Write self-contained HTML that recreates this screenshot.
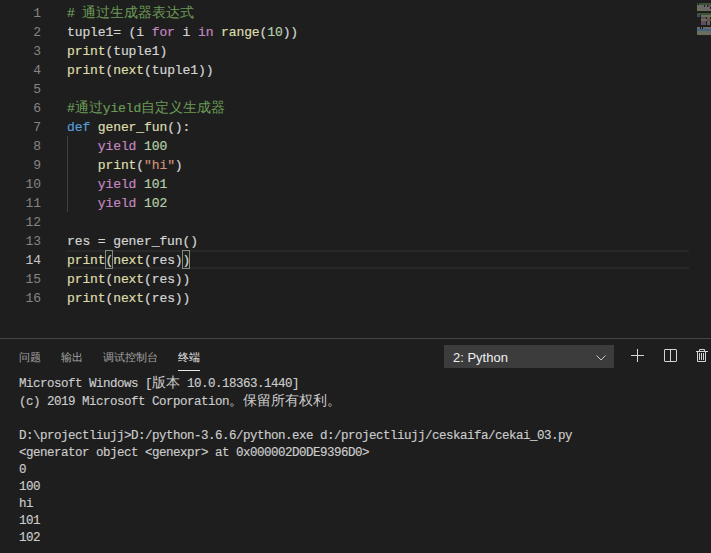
<!DOCTYPE html>
<html><head><meta charset="utf-8">
<style>
html,body{margin:0;padding:0;}
body{width:711px;height:553px;overflow:hidden;background:#1e1e1e;position:relative;font-family:"Liberation Mono",monospace;}
.ln{position:absolute;left:0;width:41px;text-align:right;font-size:13px;letter-spacing:-0.1px;line-height:19px;color:#858585;white-space:pre;}
.code{-webkit-text-stroke:0.2px currentColor;position:absolute;left:67px;font-size:13px;letter-spacing:-0.1px;line-height:19px;color:#d4d4d4;white-space:pre;}
.c{color:#6a9955}.k{color:#c586c0}.f{color:#dcdcaa}.n{color:#b5cea8}.s{color:#ce9178}.d{color:#569cd6}
.z{display:inline-block;width:14px;letter-spacing:0;text-align:center;-webkit-text-stroke:0;font-size:14px;line-height:17px;font-weight:300;}
.term{-webkit-text-stroke:0.15px currentColor;position:absolute;left:19px;font-size:12.5px;letter-spacing:-0.5px;line-height:17px;color:#cccccc;white-space:pre;}
.tab{position:absolute;top:348px;font-family:"Liberation Sans",sans-serif;font-size:11px;line-height:18px;color:#a4a4a4;white-space:pre;}
.z11{display:inline-block;width:11px;text-align:center;}
</style></head><body>
<!-- current line highlight -->
<div style="position:absolute;left:67px;top:250px;width:622px;height:15px;border-top:2px solid #282828;border-bottom:2px solid #282828;"></div>
<!-- indent guide -->
<div style="position:absolute;left:67px;top:136px;width:1px;height:76px;background:#404040;"></div>
<!-- bracket match -->
<div style="position:absolute;left:105px;top:250px;width:6px;height:17px;border:1px solid #888;background:rgba(0,100,0,0.1);box-sizing:content-box;"></div>
<div style="position:absolute;left:182px;top:250px;width:6px;height:17px;border:1px solid #888;background:rgba(0,100,0,0.1);box-sizing:content-box;"></div>

<div class="ln" style="top:4px">1
2
3
4
5
6
7
8
9
10
11
12
13
<span style="color:#c6c6c6">14</span>
15
16</div>

<div class="code" style="top:4px"><span class="c"># <span class="z">通</span><span class="z">过</span><span class="z">生</span><span class="z">成</span><span class="z">器</span><span class="z">表</span><span class="z">达</span><span class="z">式</span></span>
tuple1= (i <span class="k">for</span> i <span class="k">in</span> <span class="f">range</span>(<span class="n">10</span>))
<span class="f">print</span>(tuple1)
<span class="f">print</span>(<span class="f">next</span>(tuple1))

<span class="c">#<span class="z">通</span><span class="z">过</span>yield<span class="z">自</span><span class="z">定</span><span class="z">义</span><span class="z">生</span><span class="z">成</span><span class="z">器</span></span>
<span class="d">def</span> <span class="f">gener_fun</span>():
    <span class="k">yield</span> <span class="n">100</span>
    <span class="f">print</span>(<span class="s">"hi"</span>)
    <span class="k">yield</span> <span class="n">101</span>
    <span class="k">yield</span> <span class="n">102</span>

res = gener_fun()
<span class="f">print</span>(<span class="f">next</span>(res))
<span class="f">print</span>(<span class="f">next</span>(res))
<span class="f">print</span>(<span class="f">next</span>(res))</div>

<!-- minimap -->
<svg style="position:absolute;left:697px;top:0" width="14" height="40" viewBox="0 0 14 40"><rect x="0" y="29" width="14" height="2" fill="#264f78"/><rect x="0" y="3" width="1" height="2" fill="#6a9955" fill-opacity="0.42"/><rect x="2" y="3" width="2" height="2" fill="#6a9955" fill-opacity="0.42"/><rect x="4" y="3" width="2" height="2" fill="#6a9955" fill-opacity="0.42"/><rect x="6" y="3" width="2" height="2" fill="#6a9955" fill-opacity="0.42"/><rect x="8" y="3" width="2" height="2" fill="#6a9955" fill-opacity="0.42"/><rect x="10" y="3" width="2" height="2" fill="#6a9955" fill-opacity="0.42"/><rect x="12" y="3" width="2" height="2" fill="#6a9955" fill-opacity="0.42"/><rect x="0" y="5" width="1" height="2" fill="#d4d4d4" fill-opacity="0.42"/><rect x="1" y="5" width="1" height="2" fill="#d4d4d4" fill-opacity="0.42"/><rect x="2" y="5" width="1" height="2" fill="#d4d4d4" fill-opacity="0.42"/><rect x="3" y="5" width="1" height="2" fill="#d4d4d4" fill-opacity="0.42"/><rect x="4" y="5" width="1" height="2" fill="#d4d4d4" fill-opacity="0.42"/><rect x="5" y="5" width="1" height="2" fill="#d4d4d4" fill-opacity="0.42"/><rect x="6" y="5" width="1" height="2" fill="#d4d4d4" fill-opacity="0.42"/><rect x="8" y="5" width="1" height="2" fill="#d4d4d4" fill-opacity="0.42"/><rect x="9" y="5" width="1" height="2" fill="#d4d4d4" fill-opacity="0.42"/><rect x="11" y="5" width="1" height="2" fill="#c586c0" fill-opacity="0.42"/><rect x="12" y="5" width="1" height="2" fill="#c586c0" fill-opacity="0.42"/><rect x="13" y="5" width="1" height="2" fill="#c586c0" fill-opacity="0.42"/><rect x="0" y="7" width="1" height="2" fill="#dcdcaa" fill-opacity="0.42"/><rect x="1" y="7" width="1" height="2" fill="#dcdcaa" fill-opacity="0.42"/><rect x="2" y="7" width="1" height="2" fill="#dcdcaa" fill-opacity="0.42"/><rect x="3" y="7" width="1" height="2" fill="#dcdcaa" fill-opacity="0.42"/><rect x="4" y="7" width="1" height="2" fill="#dcdcaa" fill-opacity="0.42"/><rect x="5" y="7" width="1" height="2" fill="#d4d4d4" fill-opacity="0.42"/><rect x="6" y="7" width="1" height="2" fill="#d4d4d4" fill-opacity="0.42"/><rect x="7" y="7" width="1" height="2" fill="#d4d4d4" fill-opacity="0.42"/><rect x="8" y="7" width="1" height="2" fill="#d4d4d4" fill-opacity="0.42"/><rect x="9" y="7" width="1" height="2" fill="#d4d4d4" fill-opacity="0.42"/><rect x="10" y="7" width="1" height="2" fill="#d4d4d4" fill-opacity="0.42"/><rect x="11" y="7" width="1" height="2" fill="#d4d4d4" fill-opacity="0.42"/><rect x="12" y="7" width="1" height="2" fill="#d4d4d4" fill-opacity="0.42"/><rect x="0" y="9" width="1" height="2" fill="#dcdcaa" fill-opacity="0.42"/><rect x="1" y="9" width="1" height="2" fill="#dcdcaa" fill-opacity="0.42"/><rect x="2" y="9" width="1" height="2" fill="#dcdcaa" fill-opacity="0.42"/><rect x="3" y="9" width="1" height="2" fill="#dcdcaa" fill-opacity="0.42"/><rect x="4" y="9" width="1" height="2" fill="#dcdcaa" fill-opacity="0.42"/><rect x="5" y="9" width="1" height="2" fill="#d4d4d4" fill-opacity="0.42"/><rect x="6" y="9" width="1" height="2" fill="#dcdcaa" fill-opacity="0.42"/><rect x="7" y="9" width="1" height="2" fill="#dcdcaa" fill-opacity="0.42"/><rect x="8" y="9" width="1" height="2" fill="#dcdcaa" fill-opacity="0.42"/><rect x="9" y="9" width="1" height="2" fill="#dcdcaa" fill-opacity="0.42"/><rect x="10" y="9" width="1" height="2" fill="#d4d4d4" fill-opacity="0.42"/><rect x="11" y="9" width="1" height="2" fill="#d4d4d4" fill-opacity="0.42"/><rect x="12" y="9" width="1" height="2" fill="#d4d4d4" fill-opacity="0.42"/><rect x="13" y="9" width="1" height="2" fill="#d4d4d4" fill-opacity="0.42"/><rect x="0" y="13" width="1" height="2" fill="#6a9955" fill-opacity="0.42"/><rect x="1" y="13" width="2" height="2" fill="#6a9955" fill-opacity="0.42"/><rect x="3" y="13" width="2" height="2" fill="#6a9955" fill-opacity="0.42"/><rect x="5" y="13" width="1" height="2" fill="#6a9955" fill-opacity="0.42"/><rect x="6" y="13" width="1" height="2" fill="#6a9955" fill-opacity="0.42"/><rect x="7" y="13" width="1" height="2" fill="#6a9955" fill-opacity="0.42"/><rect x="8" y="13" width="1" height="2" fill="#6a9955" fill-opacity="0.42"/><rect x="9" y="13" width="1" height="2" fill="#6a9955" fill-opacity="0.42"/><rect x="10" y="13" width="2" height="2" fill="#6a9955" fill-opacity="0.42"/><rect x="12" y="13" width="2" height="2" fill="#6a9955" fill-opacity="0.42"/><rect x="0" y="15" width="1" height="2" fill="#569cd6" fill-opacity="0.42"/><rect x="1" y="15" width="1" height="2" fill="#569cd6" fill-opacity="0.42"/><rect x="2" y="15" width="1" height="2" fill="#569cd6" fill-opacity="0.42"/><rect x="4" y="15" width="1" height="2" fill="#dcdcaa" fill-opacity="0.42"/><rect x="5" y="15" width="1" height="2" fill="#dcdcaa" fill-opacity="0.42"/><rect x="6" y="15" width="1" height="2" fill="#dcdcaa" fill-opacity="0.42"/><rect x="7" y="15" width="1" height="2" fill="#dcdcaa" fill-opacity="0.42"/><rect x="8" y="15" width="1" height="2" fill="#dcdcaa" fill-opacity="0.42"/><rect x="9" y="15" width="1" height="2" fill="#dcdcaa" fill-opacity="0.42"/><rect x="10" y="15" width="1" height="2" fill="#dcdcaa" fill-opacity="0.42"/><rect x="11" y="15" width="1" height="2" fill="#dcdcaa" fill-opacity="0.42"/><rect x="12" y="15" width="1" height="2" fill="#dcdcaa" fill-opacity="0.42"/><rect x="13" y="15" width="1" height="2" fill="#d4d4d4" fill-opacity="0.42"/><rect x="4" y="17" width="1" height="2" fill="#c586c0" fill-opacity="0.42"/><rect x="5" y="17" width="1" height="2" fill="#c586c0" fill-opacity="0.42"/><rect x="6" y="17" width="1" height="2" fill="#c586c0" fill-opacity="0.42"/><rect x="7" y="17" width="1" height="2" fill="#c586c0" fill-opacity="0.42"/><rect x="8" y="17" width="1" height="2" fill="#c586c0" fill-opacity="0.42"/><rect x="10" y="17" width="1" height="2" fill="#b5cea8" fill-opacity="0.42"/><rect x="11" y="17" width="1" height="2" fill="#b5cea8" fill-opacity="0.42"/><rect x="12" y="17" width="1" height="2" fill="#b5cea8" fill-opacity="0.42"/><rect x="4" y="19" width="1" height="2" fill="#dcdcaa" fill-opacity="0.42"/><rect x="5" y="19" width="1" height="2" fill="#dcdcaa" fill-opacity="0.42"/><rect x="6" y="19" width="1" height="2" fill="#dcdcaa" fill-opacity="0.42"/><rect x="7" y="19" width="1" height="2" fill="#dcdcaa" fill-opacity="0.42"/><rect x="8" y="19" width="1" height="2" fill="#dcdcaa" fill-opacity="0.42"/><rect x="9" y="19" width="1" height="2" fill="#d4d4d4" fill-opacity="0.42"/><rect x="10" y="19" width="1" height="2" fill="#ce9178" fill-opacity="0.42"/><rect x="11" y="19" width="1" height="2" fill="#ce9178" fill-opacity="0.42"/><rect x="12" y="19" width="1" height="2" fill="#ce9178" fill-opacity="0.42"/><rect x="13" y="19" width="1" height="2" fill="#ce9178" fill-opacity="0.42"/><rect x="4" y="21" width="1" height="2" fill="#c586c0" fill-opacity="0.42"/><rect x="5" y="21" width="1" height="2" fill="#c586c0" fill-opacity="0.42"/><rect x="6" y="21" width="1" height="2" fill="#c586c0" fill-opacity="0.42"/><rect x="7" y="21" width="1" height="2" fill="#c586c0" fill-opacity="0.42"/><rect x="8" y="21" width="1" height="2" fill="#c586c0" fill-opacity="0.42"/><rect x="10" y="21" width="1" height="2" fill="#b5cea8" fill-opacity="0.42"/><rect x="11" y="21" width="1" height="2" fill="#b5cea8" fill-opacity="0.42"/><rect x="12" y="21" width="1" height="2" fill="#b5cea8" fill-opacity="0.42"/><rect x="4" y="23" width="1" height="2" fill="#c586c0" fill-opacity="0.42"/><rect x="5" y="23" width="1" height="2" fill="#c586c0" fill-opacity="0.42"/><rect x="6" y="23" width="1" height="2" fill="#c586c0" fill-opacity="0.42"/><rect x="7" y="23" width="1" height="2" fill="#c586c0" fill-opacity="0.42"/><rect x="8" y="23" width="1" height="2" fill="#c586c0" fill-opacity="0.42"/><rect x="10" y="23" width="1" height="2" fill="#b5cea8" fill-opacity="0.42"/><rect x="11" y="23" width="1" height="2" fill="#b5cea8" fill-opacity="0.42"/><rect x="12" y="23" width="1" height="2" fill="#b5cea8" fill-opacity="0.42"/><rect x="0" y="27" width="1" height="2" fill="#d4d4d4" fill-opacity="0.42"/><rect x="1" y="27" width="1" height="2" fill="#d4d4d4" fill-opacity="0.42"/><rect x="2" y="27" width="1" height="2" fill="#d4d4d4" fill-opacity="0.42"/><rect x="4" y="27" width="1" height="2" fill="#d4d4d4" fill-opacity="0.42"/><rect x="6" y="27" width="1" height="2" fill="#d4d4d4" fill-opacity="0.42"/><rect x="7" y="27" width="1" height="2" fill="#d4d4d4" fill-opacity="0.42"/><rect x="8" y="27" width="1" height="2" fill="#d4d4d4" fill-opacity="0.42"/><rect x="9" y="27" width="1" height="2" fill="#d4d4d4" fill-opacity="0.42"/><rect x="10" y="27" width="1" height="2" fill="#d4d4d4" fill-opacity="0.42"/><rect x="11" y="27" width="1" height="2" fill="#d4d4d4" fill-opacity="0.42"/><rect x="12" y="27" width="1" height="2" fill="#d4d4d4" fill-opacity="0.42"/><rect x="13" y="27" width="1" height="2" fill="#d4d4d4" fill-opacity="0.42"/><rect x="0" y="29" width="1" height="2" fill="#dcdcaa" fill-opacity="0.15"/><rect x="1" y="29" width="1" height="2" fill="#dcdcaa" fill-opacity="0.15"/><rect x="2" y="29" width="1" height="2" fill="#dcdcaa" fill-opacity="0.15"/><rect x="3" y="29" width="1" height="2" fill="#dcdcaa" fill-opacity="0.15"/><rect x="4" y="29" width="1" height="2" fill="#dcdcaa" fill-opacity="0.15"/><rect x="5" y="29" width="1" height="2" fill="#d4d4d4" fill-opacity="0.15"/><rect x="6" y="29" width="1" height="2" fill="#dcdcaa" fill-opacity="0.15"/><rect x="7" y="29" width="1" height="2" fill="#dcdcaa" fill-opacity="0.15"/><rect x="8" y="29" width="1" height="2" fill="#dcdcaa" fill-opacity="0.15"/><rect x="9" y="29" width="1" height="2" fill="#dcdcaa" fill-opacity="0.15"/><rect x="10" y="29" width="1" height="2" fill="#d4d4d4" fill-opacity="0.15"/><rect x="11" y="29" width="1" height="2" fill="#d4d4d4" fill-opacity="0.15"/><rect x="12" y="29" width="1" height="2" fill="#d4d4d4" fill-opacity="0.15"/><rect x="13" y="29" width="1" height="2" fill="#d4d4d4" fill-opacity="0.15"/><rect x="0" y="31" width="1" height="2" fill="#dcdcaa" fill-opacity="0.42"/><rect x="1" y="31" width="1" height="2" fill="#dcdcaa" fill-opacity="0.42"/><rect x="2" y="31" width="1" height="2" fill="#dcdcaa" fill-opacity="0.42"/><rect x="3" y="31" width="1" height="2" fill="#dcdcaa" fill-opacity="0.42"/><rect x="4" y="31" width="1" height="2" fill="#dcdcaa" fill-opacity="0.42"/><rect x="5" y="31" width="1" height="2" fill="#d4d4d4" fill-opacity="0.42"/><rect x="6" y="31" width="1" height="2" fill="#dcdcaa" fill-opacity="0.42"/><rect x="7" y="31" width="1" height="2" fill="#dcdcaa" fill-opacity="0.42"/><rect x="8" y="31" width="1" height="2" fill="#dcdcaa" fill-opacity="0.42"/><rect x="9" y="31" width="1" height="2" fill="#dcdcaa" fill-opacity="0.42"/><rect x="10" y="31" width="1" height="2" fill="#d4d4d4" fill-opacity="0.42"/><rect x="11" y="31" width="1" height="2" fill="#d4d4d4" fill-opacity="0.42"/><rect x="12" y="31" width="1" height="2" fill="#d4d4d4" fill-opacity="0.42"/><rect x="13" y="31" width="1" height="2" fill="#d4d4d4" fill-opacity="0.42"/><rect x="0" y="33" width="1" height="2" fill="#dcdcaa" fill-opacity="0.42"/><rect x="1" y="33" width="1" height="2" fill="#dcdcaa" fill-opacity="0.42"/><rect x="2" y="33" width="1" height="2" fill="#dcdcaa" fill-opacity="0.42"/><rect x="3" y="33" width="1" height="2" fill="#dcdcaa" fill-opacity="0.42"/><rect x="4" y="33" width="1" height="2" fill="#dcdcaa" fill-opacity="0.42"/><rect x="5" y="33" width="1" height="2" fill="#d4d4d4" fill-opacity="0.42"/><rect x="6" y="33" width="1" height="2" fill="#dcdcaa" fill-opacity="0.42"/><rect x="7" y="33" width="1" height="2" fill="#dcdcaa" fill-opacity="0.42"/><rect x="8" y="33" width="1" height="2" fill="#dcdcaa" fill-opacity="0.42"/><rect x="9" y="33" width="1" height="2" fill="#dcdcaa" fill-opacity="0.42"/><rect x="10" y="33" width="1" height="2" fill="#d4d4d4" fill-opacity="0.42"/><rect x="11" y="33" width="1" height="2" fill="#d4d4d4" fill-opacity="0.42"/><rect x="12" y="33" width="1" height="2" fill="#d4d4d4" fill-opacity="0.42"/><rect x="13" y="33" width="1" height="2" fill="#d4d4d4" fill-opacity="0.42"/></svg>

<!-- panel -->
<div style="position:absolute;left:0;top:338px;width:711px;height:1px;background:#444444;"></div>
<div class="tab" style="left:19px"><span class="z11">问</span><span class="z11">题</span></div>
<div class="tab" style="left:61px"><span class="z11">输</span><span class="z11">出</span></div>
<div class="tab" style="left:103px"><span class="z11">调</span><span class="z11">试</span><span class="z11">控</span><span class="z11">制</span><span class="z11">台</span></div>
<div class="tab" style="left:178px;color:#e7e7e7"><span class="z11">终</span><span class="z11">端</span></div>
<div style="position:absolute;left:178px;top:370px;width:22px;height:1px;background:#e7e7e7;"></div>

<!-- dropdown -->
<div style="position:absolute;left:444px;top:345px;width:170px;height:23px;background:#3c3c3c;"></div>
<div style="position:absolute;left:453px;top:349px;font-family:'Liberation Sans',sans-serif;font-size:13px;line-height:17px;color:#f0f0f0;">2: Python</div>
<svg style="position:absolute;left:594px;top:351px" width="14" height="12" viewBox="0 0 14 12"><path d="M2.5 4.5 L7 9 L11.5 4.5" fill="none" stroke="#c5c5c5" stroke-width="1"/></svg>

<!-- icons -->
<div style="position:absolute;left:637px;top:349px;width:1px;height:13px;background:#d4d4d4;"></div>
<div style="position:absolute;left:631px;top:355px;width:13px;height:1px;background:#d4d4d4;"></div>
<div style="position:absolute;left:664px;top:349px;width:11px;height:11px;border:1px solid #d4d4d4;border-radius:1px;"></div>
<div style="position:absolute;left:670px;top:349px;width:1px;height:13px;background:#d4d4d4;"></div>
<svg style="position:absolute;left:694px;top:347px" width="16" height="17" viewBox="0 0 16 17"><path d="M5.5 4.5 V2.5 H10.5 V4.5 M2 4.5 H14 M3.5 4.5 V14.5 H11.5 V4.5 M5.5 6 V13 M7.5 6 V13 M9.5 6 V13" fill="none" stroke="#d4d4d4" stroke-width="1"/></svg>
<!-- terminal -->
<div class="term" style="top:375px">Microsoft Windows [<span class="z">版</span><span class="z">本</span> 10.0.18363.1440]
(c) 2019 Microsoft Corporation<span class="z">。</span><span class="z">保</span><span class="z">留</span><span class="z">所</span><span class="z">有</span><span class="z">权</span><span class="z">利</span><span class="z">。</span>

D:\projectliujj&gt;D:/python-3.6.6/python.exe d:/projectliujj/ceskaifa/cekai_03.py
&lt;generator object &lt;genexpr&gt; at 0x000002D0DE9396D0&gt;
0
100
hi
101
102</div>
</body></html>
